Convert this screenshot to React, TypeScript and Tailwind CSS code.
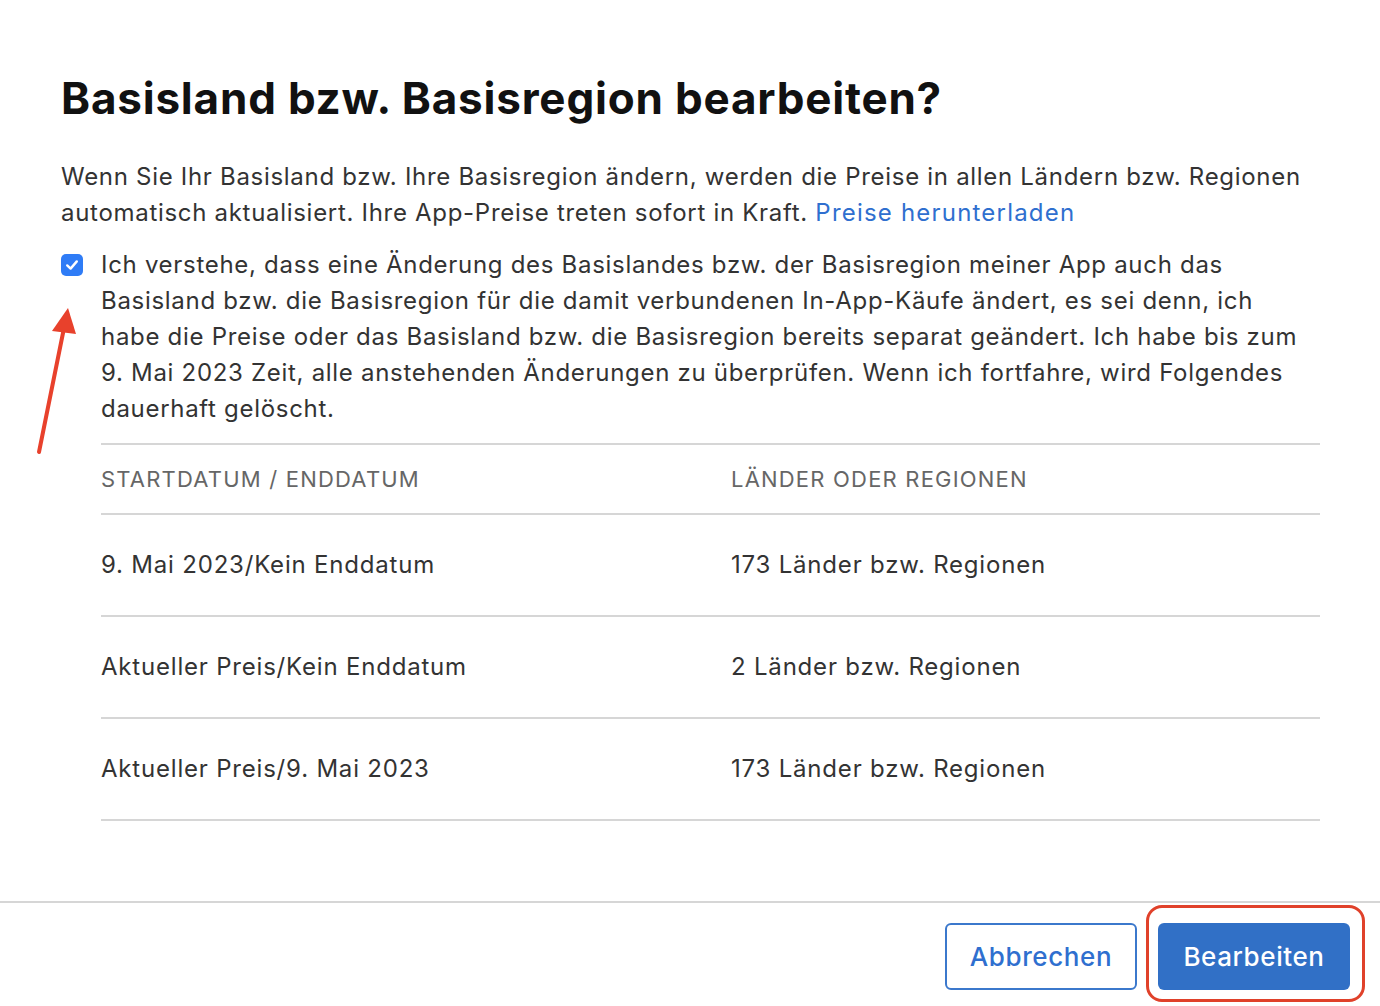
import React from 'react';

const rows = [
  { date: '9. Mai 2023/Kein Enddatum', regions: '173 Länder bzw. Regionen' },
  { date: 'Aktueller Preis/Kein Enddatum', regions: '2 Länder bzw. Regionen' },
  { date: 'Aktueller Preis/9. Mai 2023', regions: '173 Länder bzw. Regionen' },
];

const consentLines = [
  'Ich verstehe, dass eine Änderung des Basislandes bzw. der Basisregion meiner App auch das',
  'Basisland bzw. die Basisregion für die damit verbundenen In-App-Käufe ändert, es sei denn, ich',
  'habe die Preise oder das Basisland bzw. die Basisregion bereits separat geändert. Ich habe bis zum',
  '9. Mai 2023 Zeit, alle anstehenden Änderungen zu überprüfen. Wenn ich fortfahre, wird Folgendes',
  'dauerhaft gelöscht.',
];

export default function App() {
  return (
    <div
      className="relative w-[1380px] h-[1006px] bg-white flex flex-col text-[#333333] overflow-hidden"
      style={{ fontFamily: 'Inter, "Noto Sans", sans-serif' }}
    >
      {/* Annotation arrow */}
      <svg className="absolute left-0 top-0 pointer-events-none" width="120" height="470" viewBox="0 0 120 470">
        <line x1="39" y1="452" x2="64" y2="328" stroke="#e8412c" strokeWidth="4" strokeLinecap="round" />
        <polygon points="68,308 52,331 76,334" fill="#e8412c" />
      </svg>

      <div className="flex-1 pl-[61px] pr-[60px] pt-[70px]">
        <h1 className="text-[44px] leading-[56px] font-bold text-[#111111] tracking-[0.8px] whitespace-nowrap">
          Basisland bzw. Basisregion bearbeiten?
        </h1>

        <p className="mt-[33px] text-[24px] leading-[36px] tracking-[0.7px]">
          <span className="block whitespace-nowrap">
            Wenn Sie Ihr Basisland bzw. Ihre Basisregion ändern, werden die Preise in allen Ländern bzw. Regionen
          </span>
          <span className="block whitespace-nowrap">
            automatisch aktualisiert. Ihre App-Preise treten sofort in Kraft.{' '}
            <a className="text-[#2f6fcf] tracking-[1.2px]">Preise herunterladen</a>
          </span>
        </p>

        <div className="mt-[16px] flex items-start">
          <div className="mt-[7px] w-[22px] h-[22px] rounded-[5px] bg-[#2f7cf6] flex items-center justify-center shrink-0">
            <svg width="16" height="16" viewBox="0 0 16 16">
              <path d="M3.2 8.4 L6.6 11.6 L12.8 4.4" fill="none" stroke="white" strokeWidth="2.4" strokeLinecap="round" strokeLinejoin="round" />
            </svg>
          </div>
          <div className="ml-[18px] flex-1">
            <p className="text-[24px] leading-[36px] tracking-[0.7px]">
              {consentLines.map((l) => (
                <span key={l} className="block whitespace-nowrap">
                  {l}
                </span>
              ))}
            </p>

            <div className="mt-[16px] border-t-2 border-[#d6d6d6]">
              <div className="grid grid-cols-[630px_1fr] h-[70px] items-center border-b-2 border-[#d6d6d6] text-[22px] text-[#666666] uppercase tracking-[1.2px]">
                <span>Startdatum / Enddatum</span>
                <span>Länder oder Regionen</span>
              </div>
              {rows.map((r) => (
                <div
                  key={r.date + r.regions}
                  className="grid grid-cols-[630px_1fr] h-[102px] items-center border-b-2 border-[#d6d6d6] text-[24px] tracking-[0.8px]"
                >
                  <span>{r.date}</span>
                  <span>{r.regions}</span>
                </div>
              ))}
            </div>
          </div>
        </div>
      </div>

      <div className="h-[105px] border-t-2 border-[#d6d6d6] flex items-start justify-end pr-[15px] pt-[2px]">
        <button className="mt-[18px] w-[192px] h-[67px] rounded-[6px] border-2 border-[#3b78cc] text-[#2f6fcf] text-[26px] font-medium tracking-[0.6px] bg-white">
          Abbrechen
        </button>
        <div className="ml-[9px] pt-[15px] pb-[9px] pl-[9px] pr-[12px] rounded-[16px] border-[3px] border-[#e0412a]">
          <button className="w-[192px] h-[67px] rounded-[6px] bg-[#3170c6] text-white text-[26px] font-medium tracking-[0.6px]">
            Bearbeiten
          </button>
        </div>
      </div>
    </div>
  );
}
